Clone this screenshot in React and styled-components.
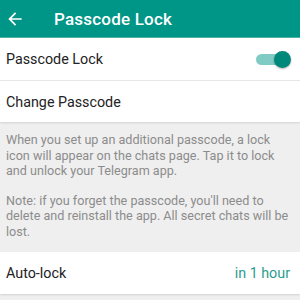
import React from "react";
import styled, { createGlobalStyle } from "styled-components";

const Global = createGlobalStyle`
  html, body { margin: 0; padding: 0; }
  body { background: #efefef; font-family: Roboto, "Noto Sans", sans-serif; -webkit-font-smoothing: antialiased; }
`;

const Page = styled.div`
  width: 300px;
  height: 300px;
  overflow: hidden;
  background: #efefef;
  display: flex;
  flex-direction: column;
`;

const Header = styled.header`
  height: 37px;
  background: #009687;
  display: flex;
  align-items: center;
  padding-left: 5px;
  gap: 29px;
  border-bottom: 1px solid #4fb3a8;
  flex-shrink: 0;
`;

const Title = styled.h1`
  margin: 0;
  color: #fff;
  font-size: 17px;
  font-weight: 500;
  letter-spacing: 0.2px;
`;

const Card = styled.div`
  background: #fff;
  box-shadow: 0 1px 2px rgba(0,0,0,0.12);
  margin-top: ${(p) => p.$mt || 0}px;
`;

const Row = styled.div`
  height: ${(p) => p.$h || 42}px;
  display: flex;
  align-items: center;
  justify-content: space-between;
  padding: 0 10px 0 6px;
  font-size: 14.3px;
  color: #222;
  border-bottom: ${(p) => (p.$divider ? "1px solid #e6e6e6" : "none")};
  box-sizing: border-box;
`;

const Value = styled.span`
  color: #2a9d8f;
`;

const Info = styled.p`
  margin: 0;
  padding: ${(p) => (p.$first ? 10 : 0)}px 10px 0 6px;
  font-size: 12.6px;
  line-height: 15.5px;
  color: #8c8c8c;
`;

const Gap = styled.div`
  height: 14px;
`;

const Track = styled.div`
  position: relative;
  width: 28px;
  height: 11px;
  border-radius: 6px;
  background: #80cbc3;
  margin-right: 6px;
`;

const Thumb = styled.div`
  position: absolute;
  right: -7px;
  top: -3px;
  width: 17px;
  height: 17px;
  border-radius: 50%;
  background: #00897b;
  box-shadow: 0 1px 2px rgba(0,0,0,0.3);
`;

const Back = () => (
  <svg width="20" height="20" viewBox="0 0 24 24">
    <path d="M20 11H7.83l5.59-5.59L12 4l-8 8 8 8 1.41-1.41L7.83 13H20v-2z" fill="#fff" />
  </svg>
);

export default function App() {
  return (
    <Page>
      <Global />
      <Header>
        <Back />
        <Title>Passcode Lock</Title>
      </Header>
      <Card>
        <Row $divider $h={43}>
          <span>Passcode Lock</span>
          <Track><Thumb /></Track>
        </Row>
        <Row $h={41}>
          <span>Change Passcode</span>
        </Row>
      </Card>
      <Info $first>
        When you set up an additional passcode, a lock icon will appear on the chats page. Tap it to lock and unlock your Telegram app.
      </Info>
      <Gap />
      <Info>
        Note: if you forget the passcode, you'll need to delete and reinstall the app. All secret chats will be lost.
      </Info>
      <Card $mt={13}>
        <Row $h={42}>
          <span>Auto-lock</span>
          <Value>in 1 hour</Value>
        </Row>
      </Card>
    </Page>
  );
}
